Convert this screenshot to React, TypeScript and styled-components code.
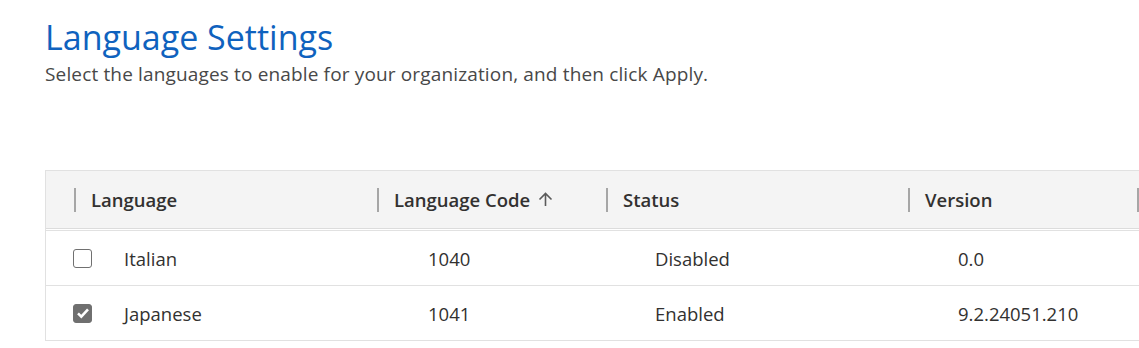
import React, { useState } from 'react';
import styled, { createGlobalStyle } from 'styled-components';

const GlobalStyle = createGlobalStyle`
  html, body {
    margin: 0;
    padding: 0;
    background: #ffffff;
    overflow: hidden;
  }
  body {
    font-family: 'Open Sans', 'Noto Sans', sans-serif;
    color: #333333;
  }
`;

const Page = styled.div`
  padding: 14px 0 0 45px;
  overflow: hidden;
`;

const Title = styled.h1`
  margin: 0;
  font-size: 34px;
  font-weight: 400;
  line-height: 46px;
  color: #0f62be;
`;

const Subtitle = styled.p`
  margin: 0;
  font-size: 19px;
  letter-spacing: 0.15px;
  line-height: 28px;
  color: #484848;
`;

const Table = styled.div`
  margin-top: 82px;
  border-left: 1px solid #e1e1e1;
  border-top: 1px solid #e1e1e1;
`;

// leading gutter, four data columns, then the start of the next (clipped) column
const cols = '28px 303px 229px 302px 229px 1fr';

const HeaderRow = styled.div`
  display: grid;
  grid-template-columns: ${cols};
  height: 57px;
  background: #f4f4f4;
  border-bottom: 1px solid #dcdcdc;
  margin-bottom: 1px;
`;

const HeaderCell = styled.div`
  display: flex;
  align-items: center;
  gap: 15px;
  min-width: 0;
  font-size: 18.5px;
  font-weight: 600;
  color: #323130;
  white-space: nowrap;
`;

const Divider = styled.span`
  width: 2px;
  height: 24px;
  background: #a6a6a6;
  flex: none;
`;

const SortArrow = styled.svg`
  margin-left: -7px;
  flex: none;
`;

const Row = styled.div`
  display: grid;
  grid-template-columns: ${cols};
  height: 54px;
  border-top: 1px solid #e1e1e1;
  &:last-child {
    border-bottom: 1px solid #e1e1e1;
  }
`;

const Cell = styled.div<{ $indent: number }>`
  display: flex;
  align-items: center;
  padding-left: ${(p) => p.$indent}px;
  font-size: 18.5px;
  color: #323130;
`;

const Check = styled.button<{ $checked: boolean }>`
  width: 19px;
  height: 19px;
  margin: 0 32px 0 -1px;
  padding: 0;
  border-radius: 3px;
  border: 1.5px solid #707070;
  background: ${(p) => (p.$checked ? '#6f6f6f' : '#ffffff')};
  display: flex;
  align-items: center;
  justify-content: center;
  cursor: pointer;
  flex: none;
`;

type Lang = {
  name: string;
  code: number;
  enabled: boolean;
  version: string;
};

const initial: Lang[] = [
  { name: 'Italian', code: 1040, enabled: false, version: '0.0' },
  { name: 'Japanese', code: 1041, enabled: true, version: '9.2.24051.210' },
];

function App() {
  const [langs, setLangs] = useState(initial);
  const toggle = (code: number) => {
    setLangs(langs.map((l) => (l.code === code ? { ...l, enabled: !l.enabled } : l)));
  };

  return (
    <Page>
      <GlobalStyle />
      <Title>Language Settings</Title>
      <Subtitle>Select the languages to enable for your organization, and then click Apply.</Subtitle>
      <Table>
        <HeaderRow>
          <div />
          <HeaderCell>
            <Divider />
            Language
          </HeaderCell>
          <HeaderCell>
            <Divider />
            Language Code
            <SortArrow width="15" height="15" viewBox="0 0 15 15">
              <path d="M7.5 14V1.5M1.5 7.5l6-6 6 6" fill="none" stroke="#5a5a5a" strokeWidth="1.6" />
            </SortArrow>
          </HeaderCell>
          <HeaderCell>
            <Divider />
            Status
          </HeaderCell>
          <HeaderCell>
            <Divider />
            Version
          </HeaderCell>
          <HeaderCell>
            <Divider />
          </HeaderCell>
        </HeaderRow>
        {langs.map((l) => (
          <Row key={l.code}>
            <div />
            <Cell $indent={0}>
              <Check $checked={l.enabled} onClick={() => toggle(l.code)} aria-label={l.name}>
                {l.enabled && (
                  <svg width="14" height="14" viewBox="0 0 14 14">
                    <path d="M2 7.4l3.3 3.2 6.7-7.2" fill="none" stroke="#fff" strokeWidth="2.6" />
                  </svg>
                )}
              </Check>
              {l.name}
            </Cell>
            <Cell $indent={51}>{l.code}</Cell>
            <Cell $indent={49}>{l.enabled ? 'Enabled' : 'Disabled'}</Cell>
            <Cell $indent={50}>{l.version}</Cell>
            <div />
          </Row>
        ))}
      </Table>
    </Page>
  );
}

export default App;
